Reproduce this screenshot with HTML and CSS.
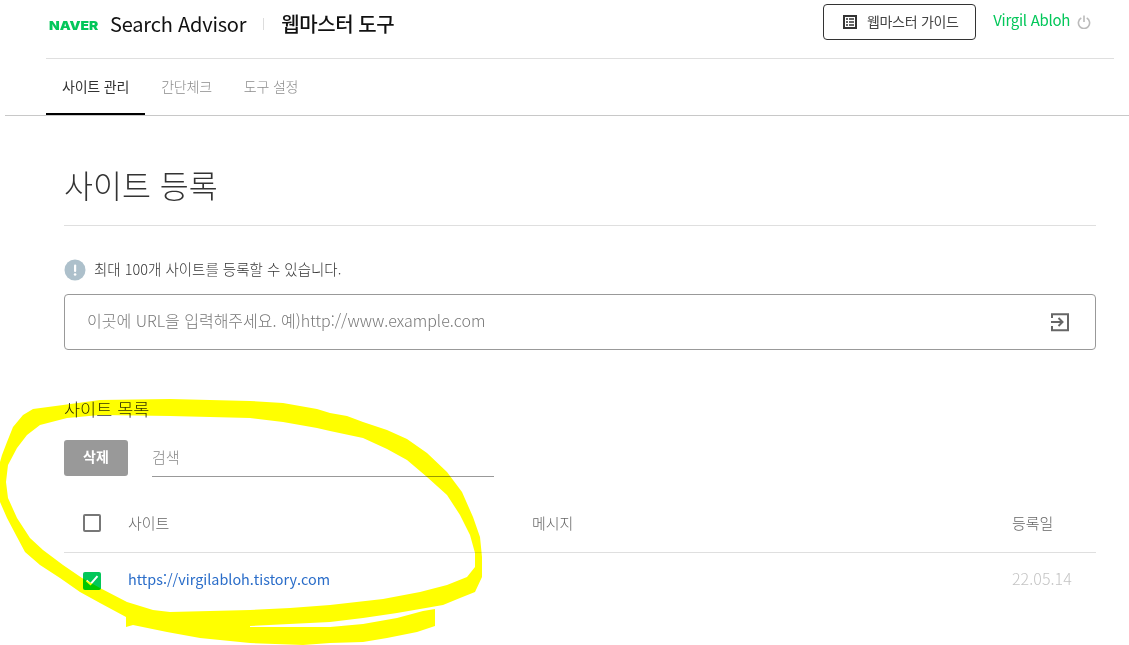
FILE: index.html
```html
<!DOCTYPE html>
<html lang="ko">
<head>
<meta charset="utf-8">
<title>네이버 서치어드바이저</title>
<link rel="stylesheet" href="styles.css">
</head>
<body>
<div class="page">
  <div class="top">
    <header class="header">
      <div class="brand">
        <span class="naver"><span class="naver-word">NAVER</span></span>
        <span class="product">Search Advisor</span>
        <span class="sep"></span>
        <span class="tool">웹마스터 도구</span>
      </div>
      <div class="account">
        <a class="guide">
          <svg class="guide-icon" width="14" height="14" viewBox="0 0 14 14"><path fill="#333" fill-rule="evenodd" d="M0 0h14v14H0zM2 2v10h10V2zM3 3.2h2v1.6H3zM6 3.2h5v1.6H6zM3 6.2h2v1.6H3zM6 6.2h5v1.6H6zM3 9.2h2v1.6H3zM6 9.2h5v1.6H6z"/></svg>
          <span class="guide-text">웹마스터 가이드</span>
        </a>
        <span class="user">Virgil Abloh</span>
        <svg class="power" width="14" height="14" viewBox="0 0 14 14"><path fill="none" stroke="#bbb" stroke-width="1.6" d="M4.3 3A5.6 5.6 0 1 0 9.7 3M7 .5v6.5"/></svg>
      </div>
    </header>
    <nav class="tabs">
      <a class="tab active">사이트 관리</a>
      <a class="tab">간단체크</a>
      <a class="tab">도구 설정</a>
    </nav>
  </div>
  <main class="content">
    <h1 class="title">사이트 등록</h1>
    <p class="note">
      <svg width="22" height="22" viewBox="0 0 22 22"><circle cx="11" cy="11" r="10.5" fill="#adc0cb"/><rect x="10" y="5.5" width="2.2" height="7.5" rx="1" fill="#fff"/><circle cx="11.1" cy="15.5" r="1.3" fill="#fff"/></svg>
      <span class="note-text">최대 100개 사이트를 등록할 수 있습니다.</span>
    </p>
    <div class="url">
      <span class="placeholder">이곳에 URL을 입력해주세요. 예)http://www.example.com</span>
      <svg width="20" height="20" viewBox="0 0 20 20"><path fill="none" stroke="#666" stroke-width="2" d="M2 6V2.2h16v16H2V14M1 10h11M8.5 6l4 4-4 4"/></svg>
    </div>
    <h2 class="list-title">사이트 목록</h2>
    <div class="tools">
      <button class="delete">삭제</button>
      <div class="search">검색</div>
    </div>
    <div class="row head">
      <span class="check"></span>
      <span class="col-site">사이트</span>
      <span class="col-msg">메시지</span>
      <span class="col-date">등록일</span>
    </div>
    <div class="row item">
      <span class="check on"><svg width="14" height="11" viewBox="0 0 14 11"><path fill="none" stroke="#fff" stroke-width="2" d="M1.5 5.5l4 3.6 7-8"/></svg></span>
      <a class="col-site link">https://virgilabloh.tistory.com</a>
      <span class="col-msg"></span>
      <span class="col-date date">22.05.14</span>
    </div>
  </main>
  <svg class="marker" width="1129" height="645" viewBox="0 0 1129 645">
    <path fill="#ff0" fill-rule="evenodd" d="M0 462L2 455L7 442L13 427L23 415L33 409L63 405L100 400L170 399L250 401L283 403L317 409L330 413L347 416L363 422L387 430L407 439L427 453L447 472L462 492L473 517L480 537L482 557L482 577L475 592L460 598L443 605L420 609L397 613L363 618L330 622L250 626L250 627L330 627L363 624L397 618L423 611L435 609L435 626L417 632L387 638L363 642L330 643L303 645L250 643L200 638L167 632L133 625L126 627L126 617L100 603L80 592L60 578L40 565L25 552L17 537L7 518L0 502Z M6 482L8 498L17 518L30 538L43 550L63 565L82 578L100 588L127 602L153 610L170 612L250 610L290 608L330 605L383 599L420 592L447 585L467 577L475 567L475 553L470 535L460 515L447 495L427 477L407 460L387 449L363 438L330 431L317 428L283 422L250 418L170 416L100 415L67 418L40 425L27 435L17 448L8 465Z"/>
  </svg>
</div>
</body>
</html>
```
FILE: styles.css
```css
* { box-sizing: border-box; }
html, body { margin: 0; padding: 0; background: #fff; }
body {
  font-family: "Noto Sans CJK KR", "Noto Sans", sans-serif;
  color: #333;
  overflow: hidden;
}
.page { position: relative; width: 1129px; height: 645px; overflow: hidden; }
.top { margin-left: 5px; border-bottom: 1px solid #c8c8c8; height: 116px; padding: 0 15px 0 41px; }
.header {
  height: 59px;
  border-bottom: 1px solid #dfdfdf;
  display: flex;
  justify-content: space-between;
  align-items: flex-start;
}
.brand { display: flex; align-items: center; height: 47px; padding-left: 3px; }
.naver {
  width: 49px;
  margin-right: 12px;
  padding-top: 3px;
}
.naver-word {
  display: block;
  font-family: "Inter", sans-serif;
  font-weight: 900;
  font-size: 12.4px;
  color: #03c75a;
  transform: scaleX(1.12);
  transform-origin: left center;
}
.product { font-size: 20px; color: #111; letter-spacing: -0.2px; }
.sep { width: 1px; height: 12px; background: #ddd; margin: 0 17px; }
.tool { font-size: 20px; font-weight: 500; color: #111; letter-spacing: -0.45px; }
.account { display: flex; align-items: center; padding-top: 4px; padding-right: 23px; }
.guide {
  width: 153px;
  height: 36px;
  border: 1px solid #333;
  border-radius: 4px;
  display: flex;
  align-items: center;
  justify-content: center;
  gap: 10px;
  padding-left: 4px;
  font-size: 14px;
  color: #444;
  letter-spacing: -0.3px;
  margin-left: -1px;
  margin-right: 1px;
}
.guide-icon { flex: none; margin-left: -2px; }
.guide-text { margin-top: -3px; }
.user { margin-left: 16px; font-size: 15px; color: #03c75a; letter-spacing: -0.3px; margin-top: -6px; }
.power { margin-left: 7px; margin-top: -1px; }
.tabs { display: flex; height: 56px; }
.tab {
  padding: 0 16px;
  height: 56px;
  font-size: 14px;
  line-height: 54px;
  color: #8c8c8c;
  letter-spacing: -0.2px;
  font-weight: 300;
}
.tab.active { color: #333; border-bottom: 2px solid #000; font-weight: 400; }
.content { padding: 0 33px 0 64px; }
.title {
  margin: 0;
  height: 110px;
  padding-top: 42px;
  font-size: 31.5px;
  font-weight: 300;
  line-height: 52px;
  color: #333;
  border-bottom: 1px solid #dfdfdf;
}
.note {
  margin: 33px 0 0;
  height: 22px;
  display: flex;
  align-items: center;
  gap: 8px;
  font-size: 14.5px;
  font-weight: 300;
  color: #333;
  letter-spacing: 0;
}
.note-text { margin-top: -4px; }
.url {
  margin-top: 13px;
  height: 56px;
  border: 1px solid #999;
  border-radius: 4px;
  display: flex;
  align-items: center;
  justify-content: space-between;
  padding: 0 25px 0 22px;
  font-size: 16px;
  font-weight: 300;
  color: #777;
}
.placeholder { margin-top: -4px; }
.list-title { margin: 48px 0 0; height: 22px; font-size: 17.5px; font-weight: 300; line-height: 22px; color: #333; }
.tools { display: flex; margin-top: 20px; height: 37px; gap: 24px; }
.delete {
  width: 64px;
  height: 36px;
  border: 0;
  border-radius: 3px;
  background: #999;
  color: #fff;
  font-family: inherit;
  font-size: 14px;
  font-weight: 700;
  padding: 0 0 5px;
}
.search {
  width: 342px;
  height: 37px;
  border-bottom: 1px solid #999;
  font-size: 15px;
  font-weight: 300;
  line-height: 34px;
  color: #888;
}
.row { display: flex; align-items: center; }
.head { height: 76px; padding-top: 16px; border-bottom: 1px solid #dfdfdf; font-size: 15px; color: #666; font-weight: 300; }
.item { height: 55px; font-size: 14.4px; }
.check {
  width: 18px;
  height: 18px;
  margin-left: 19px;
  border: 2px solid #777;
  border-radius: 2px;
  display: flex;
  align-items: center;
  justify-content: center;
  flex: none;
}
.check.on { background: #03c75a; border: 0; }
.col-site { margin-left: 27px; width: 404px; flex: none; }
.col-msg { width: 480px; flex: none; }
.link { color: #2a6dc9; font-weight: 400; margin-top: -4px; }
.date { color: #c4c4c4; font-weight: 300; font-size: 16px; margin-top: -6px; letter-spacing: 0.05px; }
.marker { position: absolute; left: 0; top: 0; mix-blend-mode: multiply; pointer-events: none; }
```
